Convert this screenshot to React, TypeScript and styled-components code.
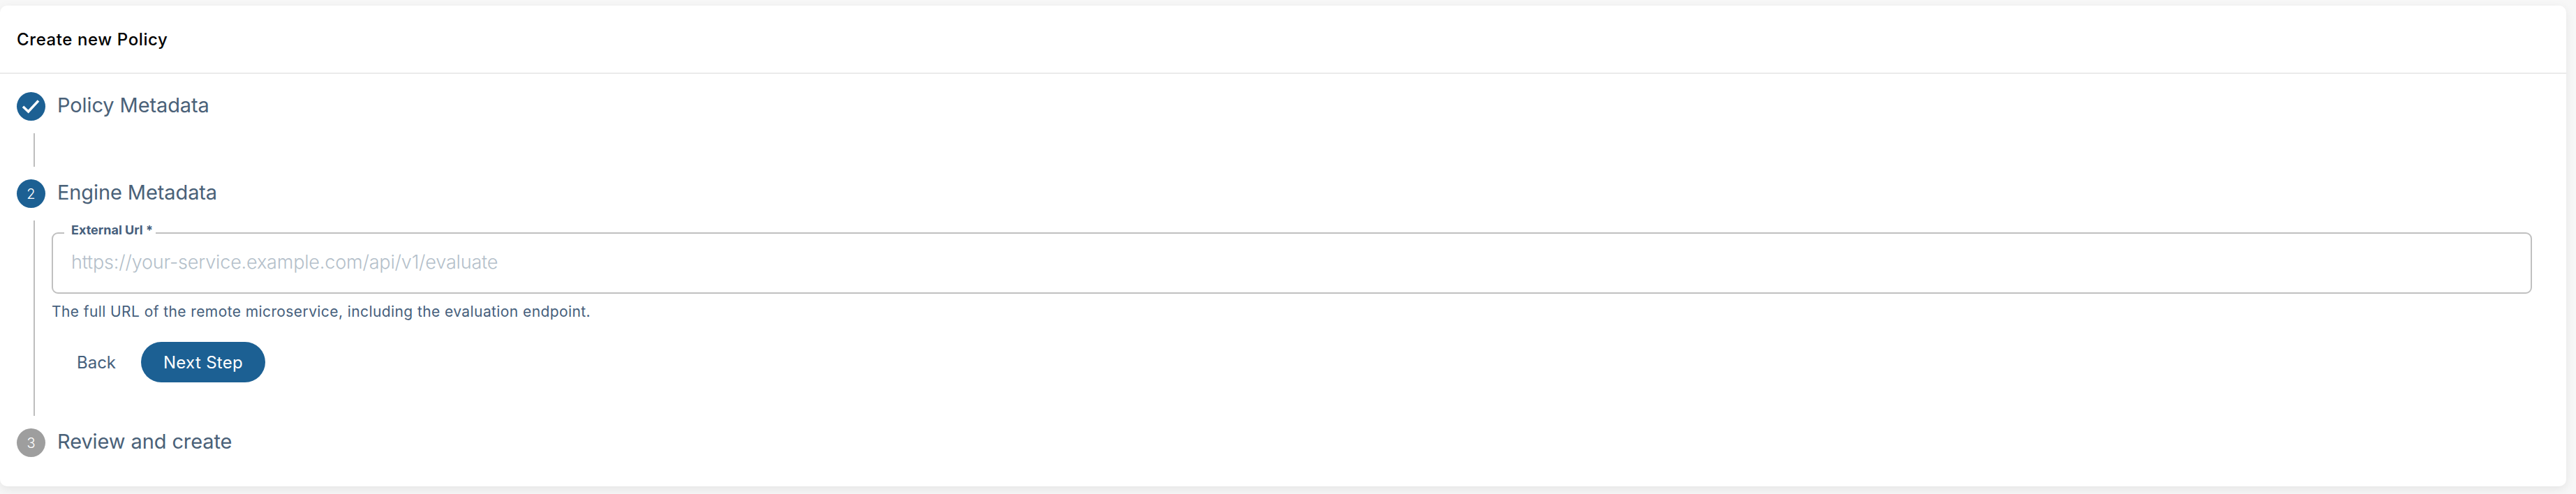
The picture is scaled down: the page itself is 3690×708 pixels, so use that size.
import styled, { createGlobalStyle } from "styled-components";

const GlobalStyle = createGlobalStyle`
  html, body {
    margin: 0;
    padding: 0;
    background: #f7f7f7;
  }
  body {
    font-family: "Inter", "Noto Sans", sans-serif;
  }
`;

function CheckIcon() {
  return (
    <svg width="41" height="41" viewBox="0 0 41 41" fill="none">
      <path d="M9 20.8l7.6 7.2L31 12.4" stroke="#fff" strokeWidth="3.6" />
    </svg>
  );
}

function App() {
  return (
    <>
      <GlobalStyle />
      <Page>
        <Card>
          <CardHeader>
            <CardTitle>Create new Policy</CardTitle>
          </CardHeader>
          <Stepper>
            <StepHead>
              <StepBadge $state="active">
                <CheckIcon />
              </StepBadge>
              <StepLabel>Policy Metadata</StepLabel>
            </StepHead>
            <StepBody />
            <StepHead>
              <StepBadge $state="active">2</StepBadge>
              <StepLabel>Engine Metadata</StepLabel>
            </StepHead>
            <StepBody>
              <Field>
                <FieldLegend>External Url *</FieldLegend>
                <FieldInput placeholder="https://your-service.example.com/api/v1/evaluate" readOnly />
              </Field>
              <HelperText>
                The full URL of the remote microservice, including the evaluation endpoint.
              </HelperText>
              <Actions>
                <BackButton>Back</BackButton>
                <NextButton>Next Step</NextButton>
              </Actions>
            </StepBody>
            <StepHead>
              <StepBadge $state="idle">3</StepBadge>
              <StepLabel>Review and create</StepLabel>
            </StepHead>
          </Stepper>
        </Card>
      </Page>
    </>
  );
}

const Page = styled.div`
  height: 708px;
  box-sizing: border-box;
  padding: 8px 14px 11px 0;
  overflow: hidden;
`;

const Card = styled.section`
  height: 100%;
  background: #ffffff;
  border-radius: 10px;
  box-shadow: 0 4px 14px rgba(0, 0, 0, 0.08);
`;

const CardHeader = styled.header`
  display: flex;
  align-items: center;
  height: 96px;
  padding: 0 24px;
  border-bottom: 2px solid #ebebeb;
`;

const CardTitle = styled.h2`
  margin: 0;
  font-size: 24px;
  font-weight: 500;
  letter-spacing: 0.6px;
  color: #000000;
`;

const Stepper = styled.div`
  display: flex;
  flex-direction: column;
  padding: 26px 24px 0;
`;

const StepHead = styled.div`
  display: flex;
  align-items: center;
  gap: 17px;
  height: 41px;
`;

const StepBadge = styled.div<{ $state: "active" | "idle" }>`
  display: flex;
  align-items: center;
  justify-content: center;
  flex: none;
  width: 41px;
  height: 41px;
  border-radius: 50%;
  font-size: 20px;
  font-weight: 300;
  color: #ffffff;
  background: ${(p) => (p.$state === "active" ? "#1c6093" : "#9e9e9e")};
`;

const StepLabel = styled.span`
  margin-bottom: 4px;
  font-size: 29px;
  font-weight: 400;
  letter-spacing: -0.1px;
  color: #4a6178;
`;

const StepBody = styled.div`
  min-height: 48px;
  margin: 18px 0 18px 24px;
  padding-left: 24px;
  border-left: 2px solid #bdbdbd;

  &:has(fieldset) {
    padding-top: 4px;
  }
`;

const Field = styled.fieldset`
  display: block;
  margin: 0;
  padding: 0 26px;
  height: 101px;
  box-sizing: border-box;
  width: 3553px;
  border: 2px solid #c0c0c0;
  border-radius: 9px;
`;

const FieldLegend = styled.legend`
  margin-left: -10px;
  padding: 0 4px 8px 10px;
  font-size: 18px;
  font-weight: 700;
  color: #46607c;
  line-height: 20px;
`;

const FieldInput = styled.input`
  display: block;
  width: 100%;
  margin-top: 8px;
  padding: 0;
  border: 0;
  outline: 0;
  background: transparent;
  font-family: inherit;
  font-size: 27px;
  font-weight: 300;
  letter-spacing: -0.17px;
  line-height: 40px;
  color: #46607c;

  &::placeholder {
    color: #b4bfca;
    opacity: 1;
  }
`;

const HelperText = styled.p`
  margin: 13px 0 0;
  font-size: 21px;
  font-weight: 400;
  letter-spacing: 0.41px;
  color: #46607c;
`;

const Actions = styled.div`
  display: flex;
  align-items: center;
  margin: 31px 0 48px;
`;

const BackButton = styled.button`
  width: 128px;
  height: 58px;
  padding: 0;
  border: 0;
  background: transparent;
  font-family: inherit;
  font-size: 24px;
  font-weight: 400;
  color: #46607c;
`;

const NextButton = styled.button`
  width: 178px;
  height: 58px;
  padding: 0;
  border: 0;
  border-radius: 29px;
  background: #1c6093;
  font-family: inherit;
  font-size: 24px;
  font-weight: 400;
  letter-spacing: 0.3px;
  color: #ffffff;
`;

export default App;
